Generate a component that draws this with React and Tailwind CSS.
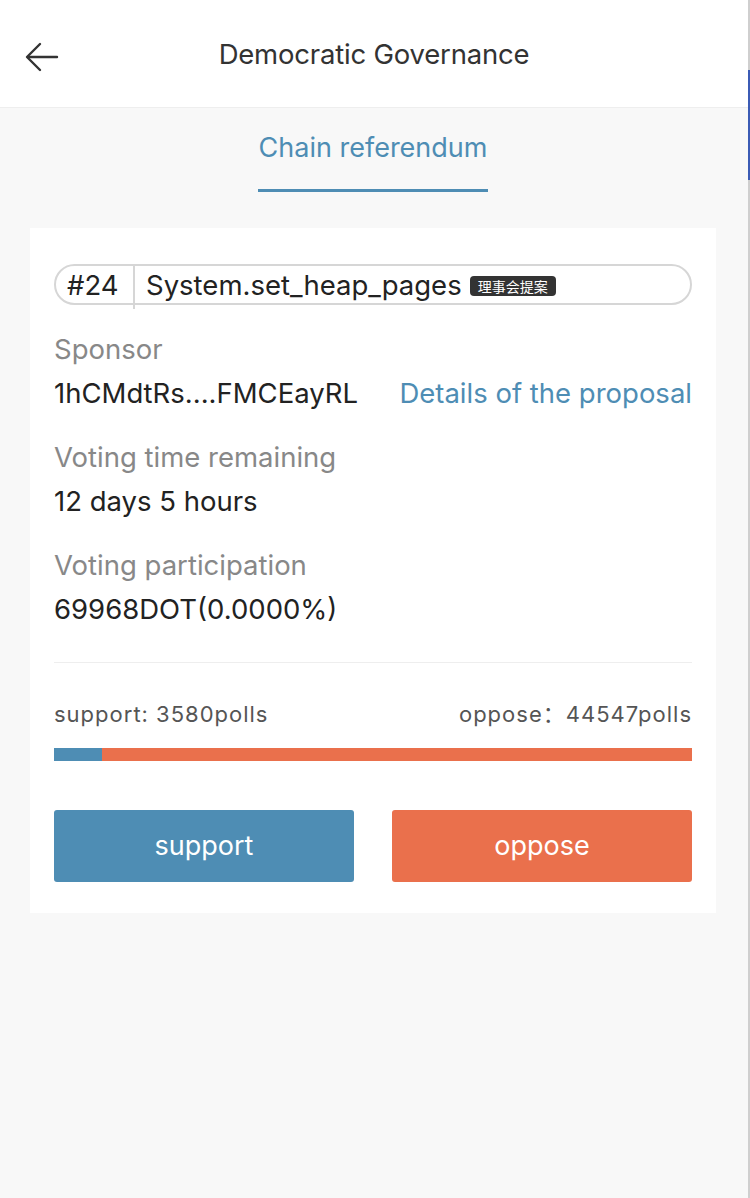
export default function App() {
  const font = { fontFamily: 'Inter, "Noto Sans", "Noto Sans CJK SC", sans-serif' };
  return (
    <div className="flex w-[750px] h-[1198px] bg-[#f8f8f8]" style={font}>
      <div className="flex-1 flex flex-col">
        <div className="h-[108px] bg-white border-b border-[#eeeeee] flex items-center relative">
          <div className="absolute left-[24px] top-[40px] w-[36px] h-[34px] flex items-center justify-center">
            <svg width="36" height="34" viewBox="0 0 36 34" fill="none" stroke="#333" strokeWidth="2.4" strokeLinecap="round" strokeLinejoin="round">
              <path d="M33 17H4" />
              <path d="M16 4L3 17L16 30" />
            </svg>
          </div>
          <div className="w-full text-center text-[27.5px] text-[#333] tracking-[-0.2px] pt-[2px]">Democratic Governance</div>
        </div>
        <div className="flex justify-center pr-[2px]">
          <div className="flex flex-col items-center">
            <div className="text-[27px] text-[#4e8db4] leading-[36px] mt-[22px]">Chain referendum</div>
            <div className="w-[230px] h-[3px] bg-[#4e8db4] mt-[23px]" />
          </div>
        </div>
        <div className="ml-[30px] w-[686px] mt-[36px] bg-white px-[24px] pt-[36px] pb-[31px]">
          <div className="h-[41px] rounded-full border-2 border-[#d6d6d6] flex items-center relative">
            <div className="pl-[11px] w-[77px] text-[27.5px] text-[#222] pt-[2px]">#24</div>
            <div className="absolute left-[77px] top-[-2px] w-[2px] h-[45px] bg-[#d6d6d6]" />
            <div className="pl-[13px] text-[27.5px] text-[#222] whitespace-nowrap pt-[2px]">System.set_heap_pages</div>
            <div className="ml-[8px] mt-[2px] h-[20px] px-[8px] rounded-[4px] bg-[#333] text-white text-[14px] leading-[20px] whitespace-nowrap" style={{ fontFamily: '"Noto Sans CJK SC", sans-serif' }}>理事会提案</div>
          </div>
          <div className="mt-[22px] text-[27.5px] leading-[44px] text-[#888]">Sponsor</div>
          <div className="flex justify-between text-[27.5px] leading-[44px]">
            <span className="text-[#222]">1hCMdtRs....FMCEayRL</span>
            <span className="text-[#4e8db4]">Details of the proposal</span>
          </div>
          <div className="mt-[20px] text-[27.5px] leading-[44px] text-[#888]">Voting time remaining</div>
          <div className="text-[27.5px] leading-[44px] text-[#222]">12 days 5 hours</div>
          <div className="mt-[20px] text-[27.5px] leading-[44px] text-[#888]">Voting participation</div>
          <div className="text-[27.5px] leading-[44px] text-[#222]">69968DOT(0.0000%)</div>
          <div className="mt-[31px] h-[1px] bg-[#eeeeee]" />
          <div className="mt-[36px] flex justify-between text-[22px] tracking-[1px] leading-[30px] text-[#555]">
            <span>support: 3580polls</span>
            <span>oppose：44547polls</span>
          </div>
          <div className="mt-[19px] h-[13px] flex bg-[#ea704c]">
            <div className="w-[48px] bg-[#4e8db4]" />
          </div>
          <div className="mt-[49px] flex justify-between">
            <div className="w-[300px] h-[72px] rounded-[3px] bg-[#4e8db4] flex items-center justify-center text-white text-[27px]">support</div>
            <div className="w-[300px] h-[72px] rounded-[3px] bg-[#ea704c] flex items-center justify-center text-white text-[27px]">oppose</div>
          </div>
        </div>
      </div>
      <div className="w-[2px] bg-[#cfcfcf] relative">
        <div className="absolute left-0 top-[70px] w-[2px] h-[110px] bg-[#3b5bb5]" />
      </div>
    </div>
  );
}
